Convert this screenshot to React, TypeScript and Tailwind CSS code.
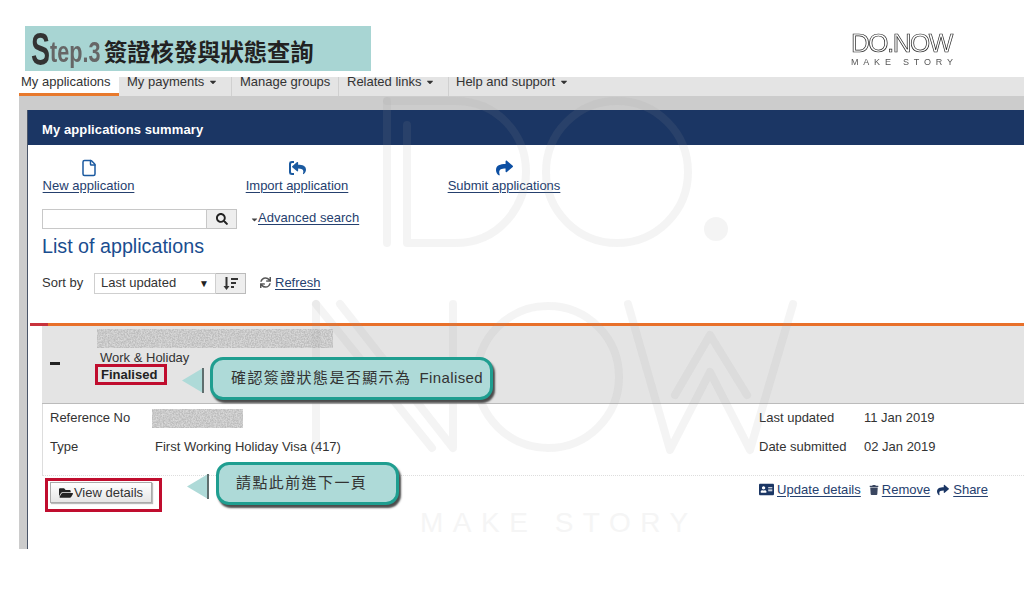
import React from "react";
import { File } from "lucide-react";
import { FaShare, FaReply, FaSearch, FaSync, FaFolderOpen, FaTrash, FaAddressCard, FaCaretDown } from "react-icons/fa";

const linkCls = "underline text-[#25406e] underline-offset-2";

function Noise({ w, h, id }: { w: number; h: number; id: string }) {
  return (
    <svg width={w} height={h} className="block">
      <filter id={id}>
        <feTurbulence type="fractalNoise" baseFrequency="0.7" numOctaves="2" seed="3" />
        <feColorMatrix values="0 0 0 0 0.5 0 0 0 0 0.5 0 0 0 0 0.5 2.4 0 0 0 -0.7" />
      </filter>
      <rect width={w} height={h} fill="#d8d8d8" />
      <rect width={w} height={h} filter={`url(#${id})`} />
    </svg>
  );
}

function Watermark() {
  return (
    <svg className="absolute left-0 top-0 pointer-events-none" width="1024" height="597" viewBox="0 0 1024 597" fill="none" stroke="#999999" strokeOpacity="0.11" strokeWidth="8" strokeLinecap="round" strokeLinejoin="round">
      <path d="M387 101V243" />
      <path d="M407 125V243H455C500 243 526 205 526 172C526 135 498 101 455 101H387" />
      <circle cx="617" cy="172" r="71" />
      <circle cx="716" cy="229" r="12" fill="#999999" fillOpacity="0.11" stroke="none" />
      <path d="M316 304V448" />
      <path d="M340 304L453 448V304" />
      <path d="M316 304L432 448" />
      <circle cx="548" cy="377" r="71" />
      <path d="M628 304L670 450L710 372L750 450L793 304" />
      <path d="M675 395L710 335L747 395" />
    </svg>
  );
}

function Arrow({ className }: { className: string }) {
  return (
    <svg className={className} width="23" height="27" viewBox="0 0 23 27">
      <polygon points="22,1 22,26 1,13.5" fill="#aedad8" />
      <path d="M22 1V26" stroke="#5f6e6e" strokeWidth="2" />
    </svg>
  );
}

function Callout({ className, children }: { className: string; children: React.ReactNode }) {
  return (
    <div className={`absolute flex items-center rounded-[13px] border-[3px] border-[#1f9e90] bg-[#aedad8] text-[15px] tracking-[1.4px] text-[#333] shadow-[2px_3px_2px_#4c4c4c] ${className}`}>
      {children}
    </div>
  );
}

export default function App() {
  return (
    <div className="relative h-[597px] w-[1024px] overflow-hidden bg-white font-['Liberation_Sans','Noto_Sans_CJK_TC',sans-serif] text-[13px] text-[#333]">
      <header className="flex h-[77px] justify-between pt-[26px] pl-[25px]">
        <div className="flex h-[45px] w-[346px] items-center bg-[#a8d5d3] pl-[6px]">
          <span className="w-[19px] origin-left scale-x-[0.62] text-[46px] leading-[44px] font-bold text-[#333]">S</span>
          <span className="mt-[6px] w-[54px] origin-left scale-x-[0.72] text-[30px] leading-none font-bold whitespace-nowrap text-[#666]">tep.3</span>
          <span className="mt-[7px] font-['Noto_Sans_CJK_TC',sans-serif] text-[23.3px] leading-none font-bold text-[#222]">簽證核發與狀態查詢</span>
        </div>
        <div className="mt-[5px] mr-[69px] flex w-[104px] flex-col opacity-[0.99]">
          <span className="font-['Liberation_Sans',sans-serif] text-[26px] leading-[24px] tracking-[-1.5px] text-white [-webkit-text-stroke:0.7px_#222]">DO.NOW</span>
          <span className="mt-[3px] text-[9px] leading-[9px] tracking-[4.8px] whitespace-nowrap text-[#555]">MAKE STORY</span>
        </div>
      </header>

      <nav className="ml-[19px] flex h-[19px] items-stretch bg-[#e4e4e4] leading-[10px] text-[#333]">
        <div className="w-[100px] border-b-[3px] border-[#e8792c] bg-white pl-[2px] whitespace-nowrap">My applications</div>
        <div className="flex w-[113px] items-start gap-[4px] border-r border-[#d0d0d0] pl-[8px]">My payments <FaCaretDown className="text-[10px]" /></div>
        <div className="w-[107px] border-r border-[#d0d0d0] pl-[8px]">Manage groups</div>
        <div className="flex w-[110px] items-start gap-[4px] border-r border-[#d0d0d0] pl-[8px]">Related links <FaCaretDown className="text-[10px]" /></div>
        <div className="flex items-start gap-[4px] pl-[7px]">Help and support <FaCaretDown className="text-[10px]" /></div>
      </nav>

      <main className="ml-[19px]">
        <div className="h-[14px] bg-[#cccccc]" />
        <div className="flex">
          <div className="w-[9px] border-r border-[#4a5568] bg-[#cccccc]" />
          <div className="min-w-0 flex-1">
            <div className="flex h-[35px] items-center bg-[#1b3664] pt-[5px] pl-[14px] text-[13px] font-bold tracking-[0.1px] text-white">My applications summary</div>
            <div className="pl-[14px]">
              <div className="flex h-[64px] items-start pt-[14px]">
                <div className="flex w-[93px] flex-col items-center">
                  <File size={20} strokeWidth={2} className="h-[18px] text-[#1b5aa0]" />
                  <a className={`${linkCls} -mt-[1px] whitespace-nowrap`}>New application</a>
                </div>
                <div className="ml-[110px] flex w-[104px] flex-col items-center">
                  <span className="flex h-[18px] items-center text-[#1b5aa0]">
                    <span className="h-[14px] w-[5px] rounded-l-[3px] border-y-2 border-l-2 border-[#1b5aa0]" />
                    <FaReply className="ml-[-2px] text-[14px]" />
                  </span>
                  <a className={`${linkCls} -mt-[1px] whitespace-nowrap`}>Import application</a>
                </div>
                <div className="ml-[98px] flex w-[114px] flex-col items-center">
                  <FaShare className="h-[18px] text-[17px] text-[#0c4fa3]" />
                  <a className={`${linkCls} -mt-[1px] whitespace-nowrap`}>Submit applications</a>
                </div>
              </div>

              <div className="flex h-[20px] items-stretch">
                <div className="w-[165px] border border-[#c8c8c8] bg-white" />
                <div className="flex w-[30px] items-center justify-center border border-l-0 border-[#c4c4c4] bg-[#eeeeee]"><FaSearch className="text-[12px] text-[#222]" /></div>
                <div className="ml-[13px] flex items-center pb-[2px]">
                  <FaCaretDown className="mt-[3px] -mr-[1px] text-[9px] text-[#444]" />
                  <a className={`${linkCls} tracking-[0.05px]`}>Advanced search</a>
                </div>
              </div>

              <h2 className="flex h-[36px] items-center text-[19.7px] font-normal text-[#1a4d8f]">List of applications</h2>

              <div className="mt-[8px] flex h-[21px] items-stretch">
                <span className="flex w-[52px] items-center pb-[2px]">Sort by</span>
                <div className="flex w-[122px] items-center justify-between border border-[#cfcfcf] bg-white px-[6px] pb-[1px]">
                  <span>Last updated</span><span className="text-[10px] text-[#222]">▼</span>
                </div>
                <div className="flex w-[30px] items-center justify-center border border-l-0 border-[#bbb] bg-[#eeeeee]">
                  <svg width="15" height="15" viewBox="0 0 15 15" fill="#333">
                    <path d="M2.5 1h2v9h2l-3 4-3-4h2zM8 2h7v2H8zM8 6h5v2H8zM8 10h3v2H8z" />
                  </svg>
                </div>
                <div className="ml-[14px] flex items-center pb-[2px]">
                  <FaSync className="text-[11px] text-[#555]" />
                  <a className={`${linkCls} ml-[4px]`}>Refresh</a>
                </div>
              </div>

              <div className="mt-[29px] -ml-[12px] flex h-[3px]">
                <div className="w-[18px] bg-[#c8323c]" />
                <div className="flex-1 bg-[#e8702a]" />
              </div>

              <section className="flex h-[78px] border-b border-[#bbbbbb] bg-[#e4e4e4] pl-[8px]">
                <div className="mt-[36px] h-[3px] w-[10px] bg-[#222]" />
                <div className="ml-[35px] flex flex-col items-start">
                  <div className="mt-[3px] ml-[2px]"><Noise w={236} h={19} id="n1" /></div>
                  <div className="mt-[3px] ml-[5px] h-[16px] leading-[13px]">Work &amp; Holiday</div>
                  <div className="-mt-[3px] flex h-[21px] w-[72px] items-center border-[3px] border-[#c00d2e] pl-[3px] font-bold text-[#222]">Finalised</div>
                </div>
              </section>

              <section>
                <div className="grid h-[71px] grid-cols-[105px_604px_105px_1fr] grid-rows-[29px_29px] border-l border-[#dddddd] pl-[7px]">
                  <div className="flex items-center pb-[2px]">Reference No</div>
                  <div className="-ml-[3px] flex items-center"><Noise w={91} h={19} id="n2" /></div>
                  <div className="flex items-center pb-[2px]">Last updated</div>
                  <div className="flex items-center pb-[2px]">11 Jan 2019</div>
                  <div className="flex items-center pb-[2px]">Type</div>
                  <div className="flex items-center pb-[2px]">First Working Holiday Visa (417)</div>
                  <div className="flex items-center pb-[2px]">Date submitted</div>
                  <div className="flex items-center pb-[2px]">02 Jan 2019</div>
                </div>
                <div className="flex items-start border-t border-dotted border-[#dddddd] pb-[37px] pl-[3px]">
                  <div className="mt-[2px] h-[34px] w-[117px] border-[3px] border-[#c00d2e] px-[2px] pt-[1px]">
                    <button className="flex h-[21px] w-[102px] items-center justify-center gap-[1px] border border-[#aaaaaa] bg-gradient-to-b from-white to-[#e6e6e6] text-[#333] shadow-[1px_1px_1px_#bbb]">
                      <FaFolderOpen className="text-[14px] text-[#222]" />View details
                    </button>
                  </div>
                  <div className="mt-[4px] ml-[597px] flex items-center">
                    <FaAddressCard className="text-[15px] text-[#1b3664]" />
                    <a className={`${linkCls} ml-[3px] tracking-[0.05px]`}>Update details</a>
                    <FaTrash className="ml-[8px] text-[10px] text-[#3a4660]" />
                    <a className={`${linkCls} ml-[3px]`}>Remove</a>
                    <FaShare className="ml-[7px] text-[12px] text-[#1b3664]" />
                    <a className={`${linkCls} ml-[4px]`}>Share</a>
                  </div>
                </div>
              </section>
            </div>
          </div>
        </div>
      </main>

      <Watermark />
      <div className="pointer-events-none absolute top-[508px] left-[420px] text-[28px] leading-[30px] font-light tracking-[9.5px] whitespace-nowrap text-[#f5f5f5]">MAKE STORY</div>

      <Arrow className="absolute top-[367px] left-[181px]" />
      <Callout className="top-[357px] left-[210px] h-[43px] w-[283px] pl-[18px] whitespace-nowrap">確認簽證狀態是否顯示為<span className="ml-[8px] tracking-[0.4px]">Finalised</span></Callout>
      <Arrow className="absolute top-[473px] left-[186px]" />
      <Callout className="top-[462px] left-[216px] h-[43px] w-[183px] pl-[17px] whitespace-nowrap">請點此前進下一頁</Callout>
    </div>
  );
}
